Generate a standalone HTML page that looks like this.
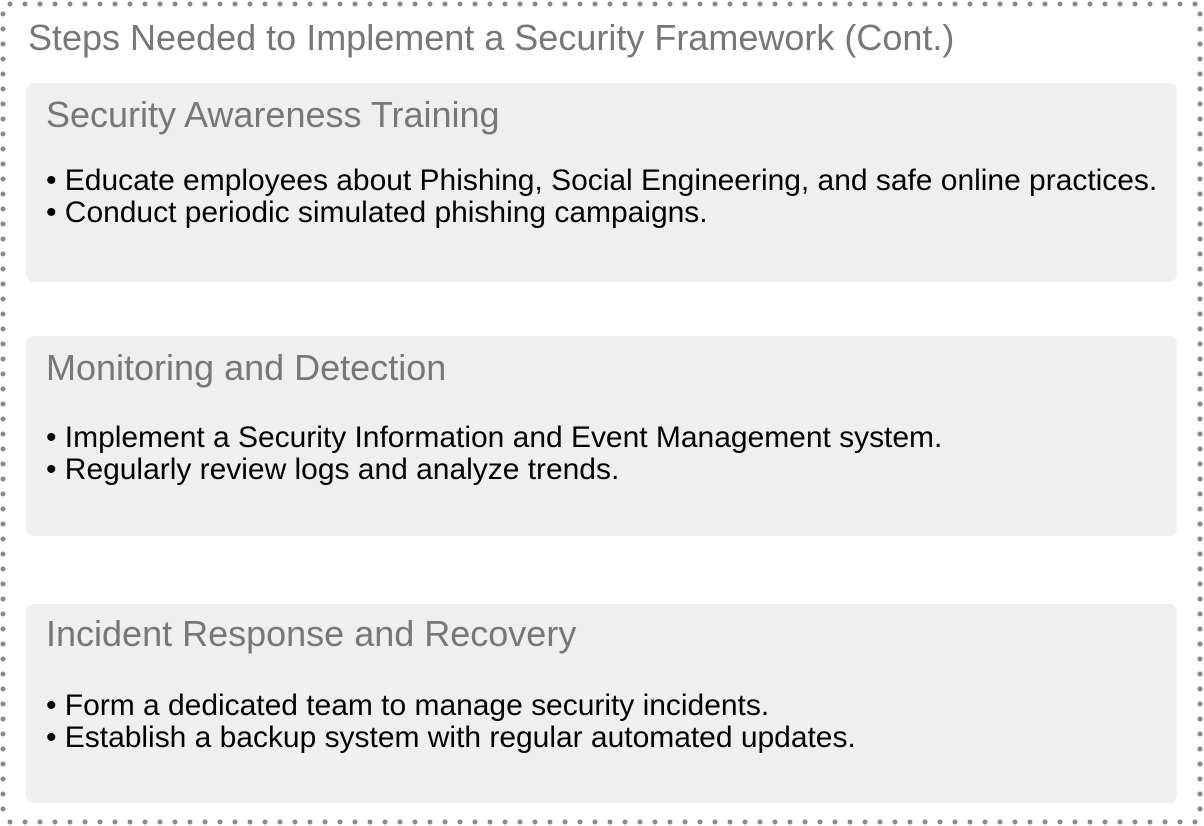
<!DOCTYPE html>
<html><head><style>
body{margin:0;width:1204px;height:826px;background:#fff;position:relative;overflow:hidden;font-family:"Liberation Sans",Arial,sans-serif}
svg.b{position:absolute;left:0;top:0}
.t{position:absolute;left:28px;top:17px;font-size:36px;line-height:41px;color:#777;white-space:nowrap}
.box{position:absolute;left:26px;width:1151px;background:#efefef;border-radius:8px}
.h{position:absolute;left:20px;top:11px;font-size:36px;line-height:41px;color:#777;white-space:nowrap}
.l{position:absolute;left:20px;top:82px;font-size:30px;line-height:32px;color:#000;white-space:nowrap;letter-spacing:-0.02px}
</style></head><body>
<svg class="b" width="1204" height="826" id="s"></svg>
<div class="t">Steps Needed to Implement a Security Framework (Cont.)</div>
<div class="box" style="top:83px;height:199px"><div class="h">Security Awareness Training</div><div class="l">• Educate employees about Phishing, Social Engineering, and safe online practices.<br>• Conduct periodic simulated phishing campaigns.</div></div>
<div class="box" style="top:336px;height:200px"><div class="h">Monitoring and Detection</div><div class="l" style="top:86px">• Implement a Security Information and Event Management system.<br>• Regularly review logs and analyze trends.</div></div>
<div class="box" style="top:604px;height:199px"><div class="h" style="top:9px">Incident Response and Recovery</div><div class="l" style="top:86px">• Form a dedicated team to manage security incidents.<br>• Establish a backup system with regular automated updates.</div></div>
<script>
var s=document.getElementById('s'),h='';
for(var x=10;x<=1196;x+=15){h+='<circle cx="'+x+'" cy="4" r="2.5" fill="#888"/>';h+='<circle cx="'+x+'" cy="822" r="2.5" fill="#888"/>';}
for(var y=14;y<=815;y+=15){h+='<circle cx="3" cy="'+y+'" r="2.5" fill="#888"/>';h+='<circle cx="1200" cy="'+y+'" r="2.5" fill="#888"/>';}
s.innerHTML=h;
</script>
</body></html>
